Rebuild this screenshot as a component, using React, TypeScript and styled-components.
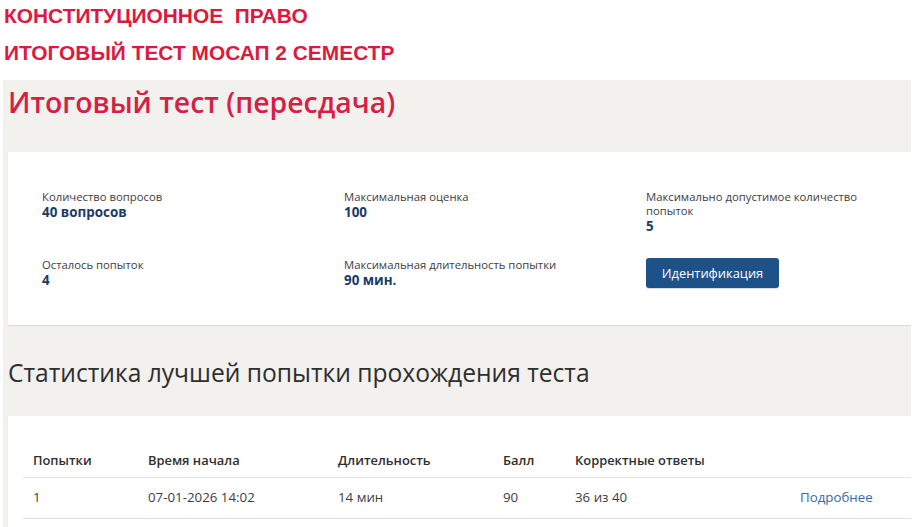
import React from "react";
import styled, { createGlobalStyle } from "styled-components";

const Global = createGlobalStyle`
  html, body { margin: 0; padding: 0; background: #ffffff; }
  body { font-family: "Open Sans", "Noto Sans", sans-serif; color: #333; overflow: hidden; height: 527px; }
  * { box-sizing: border-box; }
`;

const Banner = styled.header`
  height: 80px;
  padding-left: 4px;
  font-family: "Liberation Sans", Arial, sans-serif;
  font-weight: 700;
  font-size: 20.9px;
  color: #dc1a3f;
  white-space: pre;
`;

const BannerLine = styled.div<{ $lh: number }>`
  line-height: ${(p) => p.$lh}px;
`;

const Panel = styled.main`
  margin: 0 1px 0 3px;
  padding: 5px 0 0 5px;
  background: #f2f1ee;
  height: 447px;
  overflow: hidden;
`;

const Title = styled.h1`
  margin: 0 0 32px;
  font-size: 28.4px;
  font-weight: 600;
  line-height: 35px;
  color: #d71f45;
`;

const Card = styled.section`
  background: #ffffff;
  box-shadow: 0 1px 1px rgba(0, 0, 0, 0.09);
`;

const InfoCard = styled(Card)`
  padding: 38px 34px 36px;
  display: grid;
  grid-template-columns: 302px 302px 1fr;
  row-gap: 23px;
  align-items: start;
`;

const Field = styled.div`
  display: flex;
  flex-direction: column;
`;

const Label = styled.span`
  font-size: 11.3px;
  line-height: 14px;
  color: #3d3d3d;
  max-width: 232px;
`;

const Value = styled.span`
  font-size: 13.4px;
  line-height: 17px;
  font-weight: 700;
  color: #1b3b66;
`;

const Button = styled.button`
  align-self: start;
  justify-self: start;
  height: 30px;
  width: 133px;
  padding: 0;
  border: none;
  border-radius: 3px;
  background: #1d5289;
  color: #ffffff;
  font-family: "Open Sans", sans-serif;
  font-size: 12.9px;
  line-height: 30px;
  cursor: pointer;
  box-shadow: 0 1px 1px rgba(0, 0, 0, 0.15);
`;

const Subtitle = styled.h2`
  margin: 31px 0 27px;
  font-size: 24.6px;
  font-weight: 400;
  line-height: 33px;
  color: #2e2e2e;
`;

const TableCard = styled(Card)`
  padding: 25px 0 30px 15px;
`;

const Table = styled.table`
  width: 100%;
  border-collapse: collapse;
  font-size: 13.3px;
  line-height: 19px;
`;

const Th = styled.th<{ $w?: number }>`
  width: ${(p) => (p.$w ? `${p.$w}px` : "auto")};
  padding: 10px 10px 7px;
  text-align: left;
  font-weight: 600;
  font-size: 12.9px;
  color: #2f2f2f;
  border-bottom: 1px solid #e3e3e3;
`;

const Td = styled.td`
  padding: 10px 10px 11px;
  color: #3d3d3d;
  border-bottom: 1px solid #e3e3e3;
`;

const Link = styled.a`
  color: #3b6a9c;
  text-decoration: none;
`;

const info = [
  { label: "Количество вопросов", value: "40 вопросов" },
  { label: "Максимальная оценка", value: "100" },
  { label: "Максимально допустимое количество попыток", value: "5" },
  { label: "Осталось попыток", value: "4" },
  { label: "Максимальная длительность попытки", value: "90 мин." },
];

const cols = [
  { title: "Попытки", w: 115 },
  { title: "Время начала", w: 190 },
  { title: "Длительность", w: 165 },
  { title: "Балл", w: 72 },
  { title: "Корректные ответы", w: 225 },
  { title: "" },
];

export default function App() {
  return (
    <>
      <Global />
      <Banner>
        <BannerLine $lh={31}>КОНСТИТУЦИОННОЕ  ПРАВО</BannerLine>
        <BannerLine $lh={43}>ИТОГОВЫЙ ТЕСТ МОСАП 2 СЕМЕСТР</BannerLine>
      </Banner>
      <Panel>
        <Title>Итоговый тест (пересдача)</Title>
        <InfoCard>
          {info.map((f) => (
            <Field key={f.label}>
              <Label>{f.label}</Label>
              <Value>{f.value}</Value>
            </Field>
          ))}
          <Button>Идентификация</Button>
        </InfoCard>
        <Subtitle>Статистика лучшей попытки прохождения теста</Subtitle>
        <TableCard>
          <Table>
            <thead>
              <tr>
                {cols.map((c, i) => (
                  <Th key={i} $w={c.w}>
                    {c.title}
                  </Th>
                ))}
              </tr>
            </thead>
            <tbody>
              <tr>
                <Td>1</Td>
                <Td>07-01-2026 14:02</Td>
                <Td>14 мин</Td>
                <Td>90</Td>
                <Td>36 из 40</Td>
                <Td>
                  <Link href="#">Подробнее</Link>
                </Td>
              </tr>
            </tbody>
          </Table>
        </TableCard>
      </Panel>
    </>
  );
}
